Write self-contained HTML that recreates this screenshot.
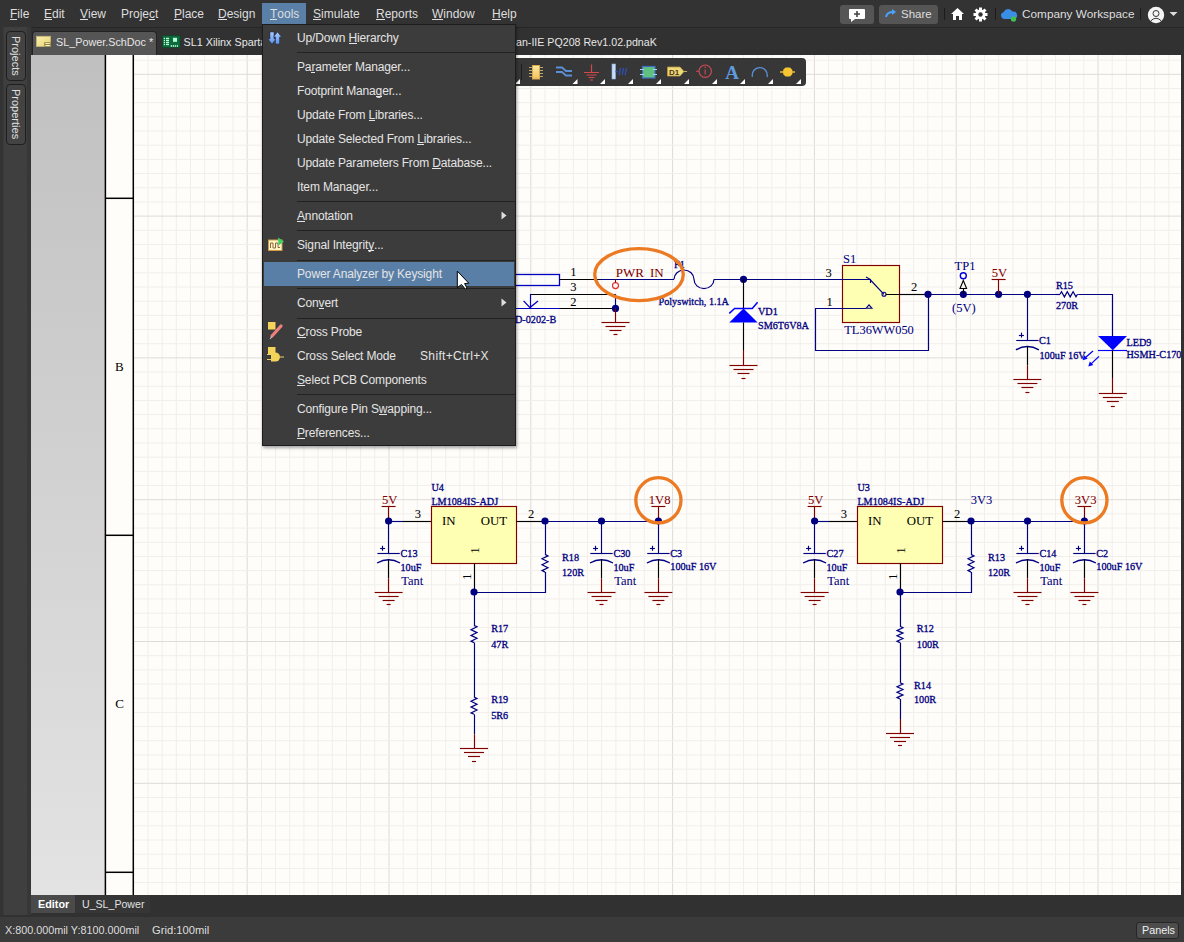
<!DOCTYPE html>
<html><head><meta charset="utf-8">
<style>
*{margin:0;padding:0;box-sizing:border-box}
html,body{width:1184px;height:942px;overflow:hidden;background:#313131;font-family:"Liberation Sans",sans-serif;color:#dcdcdc}
.a{position:absolute}
#menubar{left:0;top:0;width:1184px;height:27px;background:#333333}
#menubar .m{position:absolute;top:7px;font-size:12px;line-height:15px;color:#dedede;white-space:nowrap}
u{text-decoration:none;position:relative}
u:after{content:"";position:absolute;left:0;right:0;bottom:1px;height:1px;background:currentColor}
#tabbar{left:0;top:27px;width:1184px;height:28px;background:#313131;border-top:1px solid #262626}
#leftpanel{left:0;top:27px;width:31px;height:888px;background:linear-gradient(90deg,#333 0,#333 3px,#3a3a3a 3px,#3a3a3a 4.5px,#3f3f3f 4.5px,#3f3f3f 27px,#373737 27px)}
.sidetab{position:absolute;left:6px;width:20px;background:#434343;border:1px solid #1f1f1f;border-radius:4px}
.sidetab span{position:absolute;left:3px;top:4px;writing-mode:vertical-rl;font-size:11px;color:#e0e0e0;line-height:12px}
#doc{left:31px;top:55px;width:1150px;height:840px;overflow:hidden;background:#fffdfa}
#graycol{left:0;top:0;width:74px;height:840px;background:linear-gradient(#c0c0c0,#e3e3e3)}
#status{left:0;top:917px;width:1184px;height:25px;background:#3b3b3b}
#dropdown{left:262px;top:24px;width:254px;height:422px;background:#3c3c3c;border:1px solid #1c1c1c;box-shadow:1px 2px 3px rgba(0,0,0,.35)}
.mi{position:absolute;left:34px;font-size:12px;letter-spacing:-0.15px;line-height:14px;color:#e4e4e4;white-space:nowrap}
.sep{position:absolute;left:34px;right:0;height:1px;background:#222}
.tab{position:absolute;top:31px;height:24px;font-size:11px;line-height:14px;white-space:nowrap;color:#e6e6e6}
</style></head><body>
<div id="menubar" class="a">
  <div class="m" style="left:10px"><u>F</u>ile</div>
  <div class="m" style="left:44px"><u>E</u>dit</div>
  <div class="m" style="left:80px"><u>V</u>iew</div>
  <div class="m" style="left:121px">Proje<u>c</u>t</div>
  <div class="m" style="left:174px"><u>P</u>lace</div>
  <div class="m" style="left:218px"><u>D</u>esign</div>
  <div class="a" style="left:262px;top:3px;width:44px;height:21px;background:#5b80a8"></div>
  <div class="m" style="left:270px"><u>T</u>ools</div>
  <div class="m" style="left:313px"><u>S</u>imulate</div>
  <div class="m" style="left:376px"><u>R</u>eports</div>
  <div class="m" style="left:432px"><u>W</u>indow</div>
  <div class="m" style="left:492px"><u>H</u>elp</div>
  <!-- right side -->
  <div class="a" style="left:840px;top:5px;width:34px;height:19px;background:#555;border-radius:3px"></div>
  <svg class="a" style="left:848px;top:8px" width="18" height="15" viewBox="0 0 18 15"><path d="M2 1h14a1 1 0 0 1 1 1v8a1 1 0 0 1-1 1H7l-4 3v-3H2a1 1 0 0 1-1-1V2a1 1 0 0 1 1-1z" fill="#fff"/><path d="M9 3v6M6 6h6" stroke="#444" stroke-width="1.6"/></svg>
  <div class="a" style="left:879px;top:5px;width:59px;height:19px;background:#555;border-radius:3px"></div>
  <svg class="a" style="left:885px;top:9px" width="12" height="10" viewBox="0 0 12 10"><path d="M1 8 Q2 3 8 3" stroke="#4aa3ff" stroke-width="2" fill="none"/><path d="M7 0 L11 3 L7 6z" fill="#4aa3ff"/></svg>
  <div class="m" style="left:901px;font-size:11.5px">Share</div>
  <div class="a" style="left:944px;top:8px;width:1px;height:12px;background:#1c1c1c"></div>
  <svg class="a" style="left:950px;top:7px" width="15" height="14" viewBox="0 0 15 14"><path d="M7.5 1 L14 7 H12 V13 H9 V9 H6 V13 H3 V7 H1z" fill="#fff"/></svg>
  <svg class="a" style="left:973px;top:7px" width="15" height="15" viewBox="0 0 15 15"><g fill="#fff"><circle cx="7.5" cy="7.5" r="5"/><rect x="6" y="0.5" width="3" height="14"/><rect x="0.5" y="6" width="14" height="3"/><rect x="6" y="0.5" width="3" height="14" transform="rotate(45 7.5 7.5)"/><rect x="6" y="0.5" width="3" height="14" transform="rotate(-45 7.5 7.5)"/></g><circle cx="7.5" cy="7.5" r="2.2" fill="#333"/></svg>
  <div class="a" style="left:995px;top:8px;width:1px;height:12px;background:#1c1c1c"></div>
  <svg class="a" style="left:1000px;top:7px" width="18" height="15" viewBox="0 0 18 15"><path d="M4 12 A3.5 3.5 0 0 1 3.5 5.2 A5 5 0 0 1 12.5 4.5 A3.8 3.8 0 0 1 14 12z" fill="#3a8ee6"/><circle cx="13.5" cy="12" r="2.7" fill="#3fbf4f"/></svg>
  <div class="m" style="left:1022px;font-size:11.8px">Company Workspace</div>
  <div class="a" style="left:1140px;top:8px;width:1px;height:12px;background:#1c1c1c"></div>
  <svg class="a" style="left:1147px;top:6px" width="18" height="18" viewBox="0 0 18 18"><circle cx="9" cy="9" r="8.2" fill="#f4f4f4"/><circle cx="9" cy="7.5" r="3" fill="none" stroke="#333" stroke-width="1"/><path d="M3.5 15 Q9 9.5 14.5 15" fill="none" stroke="#333" stroke-width="1"/></svg>
  <svg class="a" style="left:1169px;top:11px" width="9" height="6" viewBox="0 0 9 6"><path d="M0.5 1 H8.5 L4.5 5z" fill="#ddd"/></svg>
</div>
<div id="tabbar" class="a"></div>
<div class="a" style="left:32px;top:31px;width:125px;height:24px;background:#555;border-radius:4px 4px 0 0;border:1px solid #222;border-bottom:none"></div>
<svg class="a" style="left:36px;top:35px" width="16" height="13" viewBox="36 35 16 13"><defs><linearGradient id="sdg" x1="0" y1="0" x2="1" y2="1"><stop offset="0" stop-color="#fbf0b0"/><stop offset="1" stop-color="#e9d470"/></linearGradient></defs><rect x="36.5" y="36.3" width="14" height="10.2" fill="url(#sdg)" stroke="#c8b878" stroke-width="0.8"/><rect x="44.3" y="42.3" width="6.3" height="4.3" fill="#8a7a3a"/><path d="M45.3 43.6h4.5M45.3 45.5h4.5" stroke="#fff6c0" stroke-width="1"/></svg>
<div class="tab" style="left:56px;top:35px;font-size:10.8px">SL_Power.SchDoc *</div>
<svg class="a" style="left:162px;top:35px" width="19" height="13" viewBox="162 35 19 13"><rect x="162.6" y="35.8" width="17.4" height="11.7" fill="#0d6b3c" stroke="#0a4a2a" stroke-width="0.6"/><g fill="#b8ffd8"><rect x="163.8" y="37.8" width="1.2" height="1.3"/><rect x="163.8" y="39.8" width="1.2" height="1.3"/><rect x="163.8" y="41.8" width="1.2" height="1.3"/><rect x="163.8" y="43.8" width="1.2" height="1.3"/><rect x="166" y="37.8" width="3" height="1.3"/><rect x="166" y="39.8" width="3" height="1.3"/><rect x="166" y="41.8" width="3" height="1.3"/><rect x="166" y="43.8" width="3" height="1.3"/><rect x="173" y="37.8" width="4" height="4"/><rect x="170.8" y="45" width="1" height="2"/><rect x="172.8" y="45" width="1" height="2"/><rect x="174.8" y="45" width="1" height="2"/><rect x="176.8" y="45" width="1" height="2"/></g></svg>
<div class="tab" style="left:183.5px;top:35px;font-size:10.8px">SL1 Xilinx Spartan-IIE</div>
<div class="tab" style="left:516px;top:35px;font-size:10.65px">an-IIE PQ208 Rev1.02.pdnaK</div>
<div id="leftpanel" class="a">
  <div class="sidetab" style="top:4px;height:50px"><span>Projects</span></div>
  <div class="sidetab" style="top:57px;height:61px"><span>Properties</span></div>
</div>
<div id="doc" class="a">
  <div id="graycol" class="a"></div>
</div>
<div class="a" style="left:31px;top:895px;width:44px;height:18px;background:#4a4a4a"></div>
<div class="a" style="left:38px;top:898px;font-size:10.8px;font-weight:bold;color:#fff;line-height:13px">Editor</div>
<div class="a" style="left:75px;top:895px;width:75px;height:18px;background:#363636"></div>
<div class="a" style="left:82px;top:898px;font-size:10.6px;color:#e0e0e0;line-height:13px">U_SL_Power</div>
<!--SCH--><svg class="a" style="left:0;top:0" width="1184" height="942" viewBox="0 0 1184 942" font-family="Liberation Serif"><defs><clipPath id="dc"><rect x="31" y="55" width="1150" height="840"/></clipPath></defs><g clip-path="url(#dc)"><line x1="147.94" y1="55" x2="147.94" y2="895" stroke="#f1eeeb" stroke-width="1"/><line x1="162.12" y1="55" x2="162.12" y2="895" stroke="#f1eeeb" stroke-width="1"/><line x1="176.30" y1="55" x2="176.30" y2="895" stroke="#f1eeeb" stroke-width="1"/><line x1="190.48" y1="55" x2="190.48" y2="895" stroke="#f1eeeb" stroke-width="1"/><line x1="204.66" y1="55" x2="204.66" y2="895" stroke="#f1eeeb" stroke-width="1"/><line x1="218.84" y1="55" x2="218.84" y2="895" stroke="#f1eeeb" stroke-width="1"/><line x1="233.02" y1="55" x2="233.02" y2="895" stroke="#f1eeeb" stroke-width="1"/><line x1="247.20" y1="55" x2="247.20" y2="895" stroke="#dedbd8" stroke-width="1"/><line x1="261.38" y1="55" x2="261.38" y2="895" stroke="#f1eeeb" stroke-width="1"/><line x1="275.56" y1="55" x2="275.56" y2="895" stroke="#f1eeeb" stroke-width="1"/><line x1="289.74" y1="55" x2="289.74" y2="895" stroke="#f1eeeb" stroke-width="1"/><line x1="303.92" y1="55" x2="303.92" y2="895" stroke="#f1eeeb" stroke-width="1"/><line x1="318.10" y1="55" x2="318.10" y2="895" stroke="#f1eeeb" stroke-width="1"/><line x1="332.28" y1="55" x2="332.28" y2="895" stroke="#f1eeeb" stroke-width="1"/><line x1="346.46" y1="55" x2="346.46" y2="895" stroke="#f1eeeb" stroke-width="1"/><line x1="360.64" y1="55" x2="360.64" y2="895" stroke="#f1eeeb" stroke-width="1"/><line x1="374.82" y1="55" x2="374.82" y2="895" stroke="#f1eeeb" stroke-width="1"/><line x1="389.00" y1="55" x2="389.00" y2="895" stroke="#dedbd8" stroke-width="1"/><line x1="403.18" y1="55" x2="403.18" y2="895" stroke="#f1eeeb" stroke-width="1"/><line x1="417.36" y1="55" x2="417.36" y2="895" stroke="#f1eeeb" stroke-width="1"/><line x1="431.54" y1="55" x2="431.54" y2="895" stroke="#f1eeeb" stroke-width="1"/><line x1="445.72" y1="55" x2="445.72" y2="895" stroke="#f1eeeb" stroke-width="1"/><line x1="459.90" y1="55" x2="459.90" y2="895" stroke="#f1eeeb" stroke-width="1"/><line x1="474.08" y1="55" x2="474.08" y2="895" stroke="#f1eeeb" stroke-width="1"/><line x1="488.26" y1="55" x2="488.26" y2="895" stroke="#f1eeeb" stroke-width="1"/><line x1="502.44" y1="55" x2="502.44" y2="895" stroke="#f1eeeb" stroke-width="1"/><line x1="516.62" y1="55" x2="516.62" y2="895" stroke="#f1eeeb" stroke-width="1"/><line x1="530.80" y1="55" x2="530.80" y2="895" stroke="#dedbd8" stroke-width="1"/><line x1="544.98" y1="55" x2="544.98" y2="895" stroke="#f1eeeb" stroke-width="1"/><line x1="559.16" y1="55" x2="559.16" y2="895" stroke="#f1eeeb" stroke-width="1"/><line x1="573.34" y1="55" x2="573.34" y2="895" stroke="#f1eeeb" stroke-width="1"/><line x1="587.52" y1="55" x2="587.52" y2="895" stroke="#f1eeeb" stroke-width="1"/><line x1="601.70" y1="55" x2="601.70" y2="895" stroke="#f1eeeb" stroke-width="1"/><line x1="615.88" y1="55" x2="615.88" y2="895" stroke="#f1eeeb" stroke-width="1"/><line x1="630.06" y1="55" x2="630.06" y2="895" stroke="#f1eeeb" stroke-width="1"/><line x1="644.24" y1="55" x2="644.24" y2="895" stroke="#f1eeeb" stroke-width="1"/><line x1="658.42" y1="55" x2="658.42" y2="895" stroke="#f1eeeb" stroke-width="1"/><line x1="672.60" y1="55" x2="672.60" y2="895" stroke="#dedbd8" stroke-width="1"/><line x1="686.78" y1="55" x2="686.78" y2="895" stroke="#f1eeeb" stroke-width="1"/><line x1="700.96" y1="55" x2="700.96" y2="895" stroke="#f1eeeb" stroke-width="1"/><line x1="715.14" y1="55" x2="715.14" y2="895" stroke="#f1eeeb" stroke-width="1"/><line x1="729.32" y1="55" x2="729.32" y2="895" stroke="#f1eeeb" stroke-width="1"/><line x1="743.50" y1="55" x2="743.50" y2="895" stroke="#f1eeeb" stroke-width="1"/><line x1="757.68" y1="55" x2="757.68" y2="895" stroke="#f1eeeb" stroke-width="1"/><line x1="771.86" y1="55" x2="771.86" y2="895" stroke="#f1eeeb" stroke-width="1"/><line x1="786.04" y1="55" x2="786.04" y2="895" stroke="#f1eeeb" stroke-width="1"/><line x1="800.22" y1="55" x2="800.22" y2="895" stroke="#f1eeeb" stroke-width="1"/><line x1="814.40" y1="55" x2="814.40" y2="895" stroke="#dedbd8" stroke-width="1"/><line x1="828.58" y1="55" x2="828.58" y2="895" stroke="#f1eeeb" stroke-width="1"/><line x1="842.76" y1="55" x2="842.76" y2="895" stroke="#f1eeeb" stroke-width="1"/><line x1="856.94" y1="55" x2="856.94" y2="895" stroke="#f1eeeb" stroke-width="1"/><line x1="871.12" y1="55" x2="871.12" y2="895" stroke="#f1eeeb" stroke-width="1"/><line x1="885.30" y1="55" x2="885.30" y2="895" stroke="#f1eeeb" stroke-width="1"/><line x1="899.48" y1="55" x2="899.48" y2="895" stroke="#f1eeeb" stroke-width="1"/><line x1="913.66" y1="55" x2="913.66" y2="895" stroke="#f1eeeb" stroke-width="1"/><line x1="927.84" y1="55" x2="927.84" y2="895" stroke="#f1eeeb" stroke-width="1"/><line x1="942.02" y1="55" x2="942.02" y2="895" stroke="#f1eeeb" stroke-width="1"/><line x1="956.20" y1="55" x2="956.20" y2="895" stroke="#dedbd8" stroke-width="1"/><line x1="970.38" y1="55" x2="970.38" y2="895" stroke="#f1eeeb" stroke-width="1"/><line x1="984.56" y1="55" x2="984.56" y2="895" stroke="#f1eeeb" stroke-width="1"/><line x1="998.74" y1="55" x2="998.74" y2="895" stroke="#f1eeeb" stroke-width="1"/><line x1="1012.92" y1="55" x2="1012.92" y2="895" stroke="#f1eeeb" stroke-width="1"/><line x1="1027.10" y1="55" x2="1027.10" y2="895" stroke="#f1eeeb" stroke-width="1"/><line x1="1041.28" y1="55" x2="1041.28" y2="895" stroke="#f1eeeb" stroke-width="1"/><line x1="1055.46" y1="55" x2="1055.46" y2="895" stroke="#f1eeeb" stroke-width="1"/><line x1="1069.64" y1="55" x2="1069.64" y2="895" stroke="#f1eeeb" stroke-width="1"/><line x1="1083.82" y1="55" x2="1083.82" y2="895" stroke="#f1eeeb" stroke-width="1"/><line x1="1098.00" y1="55" x2="1098.00" y2="895" stroke="#dedbd8" stroke-width="1"/><line x1="1112.18" y1="55" x2="1112.18" y2="895" stroke="#f1eeeb" stroke-width="1"/><line x1="1126.36" y1="55" x2="1126.36" y2="895" stroke="#f1eeeb" stroke-width="1"/><line x1="1140.54" y1="55" x2="1140.54" y2="895" stroke="#f1eeeb" stroke-width="1"/><line x1="1154.72" y1="55" x2="1154.72" y2="895" stroke="#f1eeeb" stroke-width="1"/><line x1="1168.90" y1="55" x2="1168.90" y2="895" stroke="#f1eeeb" stroke-width="1"/><line x1="134" y1="60.12" x2="1181" y2="60.12" stroke="#f1eeeb" stroke-width="1"/><line x1="134" y1="74.30" x2="1181" y2="74.30" stroke="#dedbd8" stroke-width="1"/><line x1="134" y1="88.48" x2="1181" y2="88.48" stroke="#f1eeeb" stroke-width="1"/><line x1="134" y1="102.66" x2="1181" y2="102.66" stroke="#f1eeeb" stroke-width="1"/><line x1="134" y1="116.84" x2="1181" y2="116.84" stroke="#f1eeeb" stroke-width="1"/><line x1="134" y1="131.02" x2="1181" y2="131.02" stroke="#f1eeeb" stroke-width="1"/><line x1="134" y1="145.20" x2="1181" y2="145.20" stroke="#f1eeeb" stroke-width="1"/><line x1="134" y1="159.38" x2="1181" y2="159.38" stroke="#f1eeeb" stroke-width="1"/><line x1="134" y1="173.56" x2="1181" y2="173.56" stroke="#f1eeeb" stroke-width="1"/><line x1="134" y1="187.74" x2="1181" y2="187.74" stroke="#f1eeeb" stroke-width="1"/><line x1="134" y1="201.92" x2="1181" y2="201.92" stroke="#f1eeeb" stroke-width="1"/><line x1="134" y1="216.10" x2="1181" y2="216.10" stroke="#dedbd8" stroke-width="1"/><line x1="134" y1="230.28" x2="1181" y2="230.28" stroke="#f1eeeb" stroke-width="1"/><line x1="134" y1="244.46" x2="1181" y2="244.46" stroke="#f1eeeb" stroke-width="1"/><line x1="134" y1="258.64" x2="1181" y2="258.64" stroke="#f1eeeb" stroke-width="1"/><line x1="134" y1="272.82" x2="1181" y2="272.82" stroke="#f1eeeb" stroke-width="1"/><line x1="134" y1="287.00" x2="1181" y2="287.00" stroke="#f1eeeb" stroke-width="1"/><line x1="134" y1="301.18" x2="1181" y2="301.18" stroke="#f1eeeb" stroke-width="1"/><line x1="134" y1="315.36" x2="1181" y2="315.36" stroke="#f1eeeb" stroke-width="1"/><line x1="134" y1="329.54" x2="1181" y2="329.54" stroke="#f1eeeb" stroke-width="1"/><line x1="134" y1="343.72" x2="1181" y2="343.72" stroke="#f1eeeb" stroke-width="1"/><line x1="134" y1="357.90" x2="1181" y2="357.90" stroke="#dedbd8" stroke-width="1"/><line x1="134" y1="372.08" x2="1181" y2="372.08" stroke="#f1eeeb" stroke-width="1"/><line x1="134" y1="386.26" x2="1181" y2="386.26" stroke="#f1eeeb" stroke-width="1"/><line x1="134" y1="400.44" x2="1181" y2="400.44" stroke="#f1eeeb" stroke-width="1"/><line x1="134" y1="414.62" x2="1181" y2="414.62" stroke="#f1eeeb" stroke-width="1"/><line x1="134" y1="428.80" x2="1181" y2="428.80" stroke="#f1eeeb" stroke-width="1"/><line x1="134" y1="442.98" x2="1181" y2="442.98" stroke="#f1eeeb" stroke-width="1"/><line x1="134" y1="457.16" x2="1181" y2="457.16" stroke="#f1eeeb" stroke-width="1"/><line x1="134" y1="471.34" x2="1181" y2="471.34" stroke="#f1eeeb" stroke-width="1"/><line x1="134" y1="485.52" x2="1181" y2="485.52" stroke="#f1eeeb" stroke-width="1"/><line x1="134" y1="499.70" x2="1181" y2="499.70" stroke="#dedbd8" stroke-width="1"/><line x1="134" y1="513.88" x2="1181" y2="513.88" stroke="#f1eeeb" stroke-width="1"/><line x1="134" y1="528.06" x2="1181" y2="528.06" stroke="#f1eeeb" stroke-width="1"/><line x1="134" y1="542.24" x2="1181" y2="542.24" stroke="#f1eeeb" stroke-width="1"/><line x1="134" y1="556.42" x2="1181" y2="556.42" stroke="#f1eeeb" stroke-width="1"/><line x1="134" y1="570.60" x2="1181" y2="570.60" stroke="#f1eeeb" stroke-width="1"/><line x1="134" y1="584.78" x2="1181" y2="584.78" stroke="#f1eeeb" stroke-width="1"/><line x1="134" y1="598.96" x2="1181" y2="598.96" stroke="#f1eeeb" stroke-width="1"/><line x1="134" y1="613.14" x2="1181" y2="613.14" stroke="#f1eeeb" stroke-width="1"/><line x1="134" y1="627.32" x2="1181" y2="627.32" stroke="#f1eeeb" stroke-width="1"/><line x1="134" y1="641.50" x2="1181" y2="641.50" stroke="#dedbd8" stroke-width="1"/><line x1="134" y1="655.68" x2="1181" y2="655.68" stroke="#f1eeeb" stroke-width="1"/><line x1="134" y1="669.86" x2="1181" y2="669.86" stroke="#f1eeeb" stroke-width="1"/><line x1="134" y1="684.04" x2="1181" y2="684.04" stroke="#f1eeeb" stroke-width="1"/><line x1="134" y1="698.22" x2="1181" y2="698.22" stroke="#f1eeeb" stroke-width="1"/><line x1="134" y1="712.40" x2="1181" y2="712.40" stroke="#f1eeeb" stroke-width="1"/><line x1="134" y1="726.58" x2="1181" y2="726.58" stroke="#f1eeeb" stroke-width="1"/><line x1="134" y1="740.76" x2="1181" y2="740.76" stroke="#f1eeeb" stroke-width="1"/><line x1="134" y1="754.94" x2="1181" y2="754.94" stroke="#f1eeeb" stroke-width="1"/><line x1="134" y1="769.12" x2="1181" y2="769.12" stroke="#f1eeeb" stroke-width="1"/><line x1="134" y1="783.30" x2="1181" y2="783.30" stroke="#dedbd8" stroke-width="1"/><line x1="134" y1="797.48" x2="1181" y2="797.48" stroke="#f1eeeb" stroke-width="1"/><line x1="134" y1="811.66" x2="1181" y2="811.66" stroke="#f1eeeb" stroke-width="1"/><line x1="134" y1="825.84" x2="1181" y2="825.84" stroke="#f1eeeb" stroke-width="1"/><line x1="134" y1="840.02" x2="1181" y2="840.02" stroke="#f1eeeb" stroke-width="1"/><line x1="134" y1="854.20" x2="1181" y2="854.20" stroke="#f1eeeb" stroke-width="1"/><line x1="134" y1="868.38" x2="1181" y2="868.38" stroke="#f1eeeb" stroke-width="1"/><line x1="134" y1="882.56" x2="1181" y2="882.56" stroke="#f1eeeb" stroke-width="1"/><line x1="105.4" y1="55" x2="105.4" y2="895" stroke="#000" stroke-width="1.5"/><line x1="133.3" y1="55" x2="133.3" y2="895" stroke="#000" stroke-width="1.5"/><line x1="105.4" y1="198.3" x2="133.3" y2="198.3" stroke="#000" stroke-width="1.5"/><line x1="105.4" y1="535.3" x2="133.3" y2="535.3" stroke="#000" stroke-width="1.5"/><line x1="105.4" y1="872.3" x2="133.3" y2="872.3" stroke="#000" stroke-width="1.5"/><text x="119.3" y="371" font-size="13" fill="#000" text-anchor="middle">B</text><text x="119.7" y="708" font-size="13" fill="#000" text-anchor="middle">C</text><rect x="480.5" y="274.5" width="79" height="11" fill="none" stroke="#0000c0" stroke-width="1.3"/><line x1="559.4" y1="279.5" x2="600" y2="279.5" stroke="#000" stroke-width="1.15"/><line x1="600" y1="279.5" x2="674" y2="279.5" stroke="#000080" stroke-width="1.15"/><text x="573.4" y="276.4" font-size="12.5" fill="#000" stroke="#000" stroke-width="0.05" text-anchor="middle" >1</text><text x="573.4" y="290.8" font-size="12.5" fill="#000" stroke="#000" stroke-width="0.05" text-anchor="middle" >3</text><text x="573.4" y="306.1" font-size="12.5" fill="#000" stroke="#000" stroke-width="0.05" text-anchor="middle" >2</text><line x1="530" y1="294.5" x2="615.5" y2="294.5" stroke="#000" stroke-width="1.15"/><line x1="530.5" y1="294.3" x2="530.5" y2="307.6" stroke="#0000c0" stroke-width="1.15"/><polyline points="523.6,300.9 530,307.6 538,300.9" stroke="#0000c0" stroke-width="1.3" fill="none"/><line x1="480" y1="308.5" x2="560" y2="308.5" stroke="#0000c0" stroke-width="1.15"/><line x1="560" y1="308.5" x2="615.5" y2="308.5" stroke="#000" stroke-width="1.15"/><line x1="615.5" y1="294.3" x2="615.5" y2="308.4" stroke="#000080" stroke-width="1.15"/><circle cx="615.5" cy="308.4" r="3.6" fill="#000080"/><line x1="615.5" y1="308.4" x2="615.5" y2="322" stroke="#800000" stroke-width="1.15"/><line x1="601.5" y1="322.5" x2="629.5" y2="322.5" stroke="#800000" stroke-width="1.15"/><line x1="605.5" y1="326.5" x2="625.5" y2="326.5" stroke="#800000" stroke-width="1.15"/><line x1="609.5" y1="330.5" x2="621.5" y2="330.5" stroke="#800000" stroke-width="1.15"/><line x1="613.5" y1="334.5" x2="617.5" y2="334.5" stroke="#800000" stroke-width="1.15"/><text x="515" y="323.0" font-size="10.2" fill="#000080" stroke="#000080" stroke-width="0.3" text-anchor="start" >D-0202-B</text><circle cx="615.5" cy="285.6" r="3" fill="none" stroke="#e03535" stroke-width="1.2"/><text x="615.8" y="276.7" font-size="13" fill="#800000" stroke="#800000" stroke-width="0.05" text-anchor="start" >PWR</text><text x="650" y="276.7" font-size="13" fill="#800000" stroke="#800000" stroke-width="0.05" text-anchor="start" >IN</text><line x1="615.5" y1="279.3" x2="615.5" y2="282.6" stroke="#800000" stroke-width="1.1"/><text x="674" y="268.4" font-size="10.2" fill="#000080" stroke="#000080" stroke-width="0.3" text-anchor="start" >F1</text><path d="M674,279.3 A10,9.3 0 0 1 694,279.3 A10,9.3 0 0 0 714,279.3" stroke="#000080" stroke-width="1.2" fill="none"/><text x="658.5" y="305.4" font-size="10.2" fill="#000080" stroke="#000080" stroke-width="0.3" text-anchor="start" >Polyswitch, 1.1A</text><line x1="714" y1="279.5" x2="815" y2="279.5" stroke="#000080" stroke-width="1.15"/><line x1="815" y1="279.5" x2="870" y2="279.5" stroke="#000" stroke-width="1.15"/><circle cx="743.5" cy="279.3" r="3.6" fill="#000080"/><line x1="743.5" y1="279.3" x2="743.5" y2="308.6" stroke="#000" stroke-width="1.15"/><path d="M729.3,322.5 L757.6,322.5 L743.5,308.6z" fill="#0000ff"/><polyline points="729.3,313.4 734.6,308.5 752.3,308.5 757.6,302.2" stroke="#0000ff" stroke-width="1.5" fill="none"/><line x1="743.5" y1="322.5" x2="743.5" y2="350" stroke="#000" stroke-width="1.15"/><line x1="743.5" y1="350" x2="743.5" y2="365.2" stroke="#800000" stroke-width="1.15"/><line x1="729.5" y1="365.5" x2="757.5" y2="365.5" stroke="#800000" stroke-width="1.15"/><line x1="733.5" y1="369.5" x2="753.5" y2="369.5" stroke="#800000" stroke-width="1.15"/><line x1="737.5" y1="373.5" x2="749.5" y2="373.5" stroke="#800000" stroke-width="1.15"/><line x1="741.5" y1="378.5" x2="745.5" y2="378.5" stroke="#800000" stroke-width="1.15"/><text x="758" y="315.2" font-size="10.2" fill="#000080" stroke="#000080" stroke-width="0.3" text-anchor="start" >VD1</text><text x="758" y="328.8" font-size="10.2" fill="#000080" stroke="#000080" stroke-width="0.3" text-anchor="start" >SM6T6V8A</text><text x="828.5" y="276.6" font-size="12.5" fill="#000" stroke="#000" stroke-width="0.05" text-anchor="middle" >3</text><text x="829.6" y="306.0" font-size="12.5" fill="#000" stroke="#000" stroke-width="0.05" text-anchor="middle" >1</text><rect x="842.5" y="265.5" width="57" height="57" fill="#ffffb4" stroke="#800000" stroke-width="1.15"/><line x1="815" y1="279.5" x2="870" y2="279.5" stroke="#000080" stroke-width="1.15"/><polyline points="866,277 870.5,279.5 870.5,283" stroke="#000080" stroke-width="1.1" fill="none"/><line x1="870" y1="279.5" x2="884" y2="294.3" stroke="#000080" stroke-width="1.2"/><circle cx="884" cy="294.3" r="2" fill="none" stroke="#000080" stroke-width="1.1"/><line x1="886" y1="294.5" x2="928" y2="294.5" stroke="#000" stroke-width="1.15"/><line x1="815" y1="308.5" x2="866" y2="308.5" stroke="#000080" stroke-width="1.15"/><path d="M866,308.3 L869,304.8 L872,308.3z" fill="none" stroke="#000080" stroke-width="1.1"/><line x1="899.7" y1="294.5" x2="928" y2="294.5" stroke="#000" stroke-width="1.15"/><text x="914" y="291.3" font-size="12.5" fill="#000" stroke="#000" stroke-width="0.05" text-anchor="middle" >2</text><text x="829.6" y="306.0" font-size="12.5" fill="#000" stroke="#000" stroke-width="0.05" text-anchor="start" ></text><polyline points="815.5,308.3 815.5,350.5 928.5,350.5 928.5,294.3" stroke="#000080" stroke-width="1.2" fill="none"/><text x="843" y="263.4" font-size="12.5" fill="#000080" stroke="#000080" stroke-width="0.05" text-anchor="start" >S1</text><text x="844.3" y="333.5" font-size="12.4" fill="#000080" stroke="#000080" stroke-width="0.05" text-anchor="start" >TL36WW050</text><line x1="928" y1="294.5" x2="1056" y2="294.5" stroke="#000080" stroke-width="1.15"/><circle cx="928" cy="294.3" r="3.6" fill="#000080"/><circle cx="963.3" cy="294.3" r="3.6" fill="#000080"/><circle cx="998.6" cy="294.3" r="3.6" fill="#000080"/><circle cx="1027.4" cy="294.3" r="3.6" fill="#000080"/><text x="954.6" y="270.1" font-size="12.5" fill="#000080" stroke="#000080" stroke-width="0.05" text-anchor="start" >TP1</text><circle cx="963.3" cy="275.7" r="3" fill="none" stroke="#0000e0" stroke-width="1.4"/><path d="M963.3,280.5 L960,288.5 L966.6,288.5z" fill="none" stroke="#000" stroke-width="1.1"/><line x1="963.5" y1="288.5" x2="963.5" y2="294.3" stroke="#000" stroke-width="1.15"/><text x="952" y="311.5" font-size="12.5" fill="#000080" stroke="#000080" stroke-width="0.05" text-anchor="start" >(5V)</text><line x1="998.5" y1="279.5" x2="998.5" y2="294.3" stroke="#800000" stroke-width="1.15"/><line x1="991.6" y1="279.5" x2="1005.6" y2="279.5" stroke="#800000" stroke-width="1.15"/><text x="991.7" y="277.0" font-size="12.6" fill="#800000" stroke="#800000" stroke-width="0.05" text-anchor="start" >5V</text><line x1="1056" y1="294.5" x2="1060" y2="294.5" stroke="#000080" stroke-width="1.15"/><polyline points="1060,294.3 1061.5,291.7 1064.4,296.90000000000003 1067.3,291.7 1070.2,296.90000000000003 1073.1,291.7 1076.0,296.90000000000003 1077.5,294.3" stroke="#000080" stroke-width="1.2" fill="none"/><line x1="1077.5" y1="294.5" x2="1078.3" y2="294.5" stroke="#000080" stroke-width="1.15"/><text x="1055.9" y="289.1" font-size="10.2" fill="#000080" stroke="#000080" stroke-width="0.3" text-anchor="start" >R15</text><text x="1056" y="309.3" font-size="10.2" fill="#000080" stroke="#000080" stroke-width="0.3" text-anchor="start" >270R</text><polyline points="1078.3,294.5 1112.5,294.5 1112.5,336" stroke="#000080" stroke-width="1.2" fill="none"/><path d="M1098,336 L1127,336 L1112.8,350.2z" fill="#0000ff"/><line x1="1098" y1="350.5" x2="1127" y2="350.5" stroke="#0000ff" stroke-width="1.15"/><line x1="1112.5" y1="350.2" x2="1112.5" y2="378" stroke="#000" stroke-width="1.15"/><line x1="1112.5" y1="378" x2="1112.5" y2="393.3" stroke="#800000" stroke-width="1.15"/><line x1="1098.8" y1="393.5" x2="1126.8" y2="393.5" stroke="#800000" stroke-width="1.15"/><line x1="1102.8" y1="397.5" x2="1122.8" y2="397.5" stroke="#800000" stroke-width="1.15"/><line x1="1106.8" y1="401.5" x2="1118.8" y2="401.5" stroke="#800000" stroke-width="1.15"/><line x1="1110.8" y1="406.5" x2="1114.8" y2="406.5" stroke="#800000" stroke-width="1.15"/><line x1="1093" y1="351" x2="1084.6" y2="358.2" stroke="#0000ff" stroke-width="1.3"/><path d="M1082.6,360.2 L1084.1,355.2 L1087.6,358.7z" fill="#0000ff"/><line x1="1099" y1="356.4" x2="1090.3" y2="364.6" stroke="#0000ff" stroke-width="1.3"/><path d="M1088.3,366.6 L1089.8,361.6 L1093.3,365.1z" fill="#0000ff"/><text x="1126.5" y="346.4" font-size="10.2" fill="#000080" stroke="#000080" stroke-width="0.3" text-anchor="start" >LED9</text><text x="1126.5" y="357.5" font-size="10.2" fill="#000080" stroke="#000080" stroke-width="0.3" text-anchor="start" >HSMH-C170</text><line x1="1027.5" y1="294.3" x2="1027.5" y2="340.3" stroke="#000080" stroke-width="1.15"/><line x1="1016.2" y1="340.5" x2="1038.6000000000001" y2="340.5" stroke="#000080" stroke-width="1.15"/><line x1="1018.9000000000001" y1="335.5" x2="1023.9000000000001" y2="335.5" stroke="#000080" stroke-width="1.15"/><line x1="1021.5" y1="332.6" x2="1021.5" y2="337.6" stroke="#000080" stroke-width="1.15"/><path d="M1015.9000000000001,349.8 Q1027.4,343.3 1038.9,349.8" stroke="#000080" stroke-width="1.4" fill="none"/><line x1="1027.5" y1="346.3" x2="1027.5" y2="365.3" stroke="#000" stroke-width="1.15"/><line x1="1027.5" y1="365.3" x2="1027.5" y2="379.1" stroke="#800000" stroke-width="1.15"/><line x1="1013.4000000000001" y1="379.5" x2="1041.4" y2="379.5" stroke="#800000" stroke-width="1.15"/><line x1="1017.4000000000001" y1="383.5" x2="1037.4" y2="383.5" stroke="#800000" stroke-width="1.15"/><line x1="1021.4000000000001" y1="387.5" x2="1033.4" y2="387.5" stroke="#800000" stroke-width="1.15"/><line x1="1025.4" y1="392.5" x2="1029.4" y2="392.5" stroke="#800000" stroke-width="1.15"/><text x="1039" y="343.7" font-size="10.2" fill="#000080" stroke="#000080" stroke-width="0.3" text-anchor="start" >C1</text><text x="1039.5" y="359.3" font-size="10.2" fill="#000080" stroke="#000080" stroke-width="0.3" text-anchor="start" >100uF 16V</text><line x1="388.5" y1="506.3" x2="388.5" y2="521" stroke="#800000" stroke-width="1.15"/><line x1="381.6" y1="506.5" x2="395.6" y2="506.5" stroke="#800000" stroke-width="1.15"/><text x="381.9" y="504.2" font-size="12.6" fill="#800000" stroke="#800000" stroke-width="0.05" text-anchor="start" >5V</text><circle cx="388.6" cy="521" r="3.6" fill="#000080"/><line x1="388.6" y1="521.5" x2="403" y2="521.5" stroke="#000080" stroke-width="1.15"/><line x1="403" y1="521.5" x2="431.4" y2="521.5" stroke="#000" stroke-width="1.15"/><text x="417.9" y="518.0" font-size="12.5" fill="#000" stroke="#000" stroke-width="0.05" text-anchor="middle" >3</text><rect x="431.5" y="506.5" width="85" height="57" fill="#ffffb4" stroke="#800000" stroke-width="1.15"/><text x="431.4" y="491.1" font-size="10.2" fill="#000080" stroke="#000080" stroke-width="0.3" text-anchor="start" >U4</text><text x="431.4" y="504.6" font-size="10.2" fill="#000080" stroke="#000080" stroke-width="0.3" text-anchor="start" >LM1084IS-ADJ</text><text x="441.9" y="524.8" font-size="12.8" fill="#000" stroke="#000" stroke-width="0.05" text-anchor="start" >IN</text><text x="480.7" y="524.8" font-size="12.8" fill="#000" stroke="#000" stroke-width="0.05" text-anchor="start" >OUT</text><text x="474.6" y="550.4" font-size="12.5" fill="#000" text-anchor="middle" dominant-baseline="central" transform="rotate(-90 474.6 550.4)">1</text><line x1="474.5" y1="563.2" x2="474.5" y2="592" stroke="#000" stroke-width="1.15"/><text x="467.5" y="576.7" font-size="12.5" fill="#000" text-anchor="middle" dominant-baseline="central" transform="rotate(-90 467.5 576.7)">1</text><circle cx="474" cy="592" r="3.6" fill="#000080"/><polyline points="474,592.5 545.5,592.5 545.5,572.1" stroke="#000080" stroke-width="1.2" fill="none"/><polyline points="545,554.4 548,555.9 542,558.8 548,561.8 542,564.7 548,567.7 542,570.6 545,572.1" stroke="#000080" stroke-width="1.2" fill="none"/><line x1="545.5" y1="554.4" x2="545.5" y2="521" stroke="#000080" stroke-width="1.15"/><line x1="516.5" y1="521.5" x2="545" y2="521.5" stroke="#000" stroke-width="1.15"/><text x="531" y="518.0" font-size="12.5" fill="#000" stroke="#000" stroke-width="0.05" text-anchor="middle" >2</text><line x1="545" y1="521.5" x2="658.4" y2="521.5" stroke="#000080" stroke-width="1.15"/><circle cx="545" cy="521" r="3.6" fill="#000080"/><circle cx="601.5" cy="521" r="3.6" fill="#000080"/><text x="562" y="561.2" font-size="10.2" fill="#000080" stroke="#000080" stroke-width="0.3" text-anchor="start" >R18</text><text x="562" y="576.0" font-size="10.2" fill="#000080" stroke="#000080" stroke-width="0.3" text-anchor="start" >120R</text><line x1="388.5" y1="521" x2="388.5" y2="553.5" stroke="#000080" stroke-width="1.15"/><line x1="377.40000000000003" y1="553.5" x2="399.8" y2="553.5" stroke="#000080" stroke-width="1.15"/><line x1="380.1" y1="548.5" x2="385.1" y2="548.5" stroke="#000080" stroke-width="1.15"/><line x1="382.5" y1="545.8" x2="382.5" y2="550.8" stroke="#000080" stroke-width="1.15"/><path d="M377.1,563.0 Q388.6,556.5 400.1,563.0" stroke="#000080" stroke-width="1.4" fill="none"/><line x1="388.5" y1="559.5" x2="388.5" y2="578.5" stroke="#000" stroke-width="1.15"/><line x1="388.5" y1="578.5" x2="388.5" y2="592" stroke="#800000" stroke-width="1.15"/><line x1="374.6" y1="592.5" x2="402.6" y2="592.5" stroke="#800000" stroke-width="1.15"/><line x1="378.6" y1="596.5" x2="398.6" y2="596.5" stroke="#800000" stroke-width="1.15"/><line x1="382.6" y1="600.5" x2="394.6" y2="600.5" stroke="#800000" stroke-width="1.15"/><line x1="386.6" y1="604.5" x2="390.6" y2="604.5" stroke="#800000" stroke-width="1.15"/><text x="400.5" y="556.9" font-size="10.2" fill="#000080" stroke="#000080" stroke-width="0.3" text-anchor="start" >C13</text><text x="400.5" y="571.0" font-size="10.2" fill="#000080" stroke="#000080" stroke-width="0.3" text-anchor="start" >10uF</text><text x="401.3" y="585.1" font-size="12.5" fill="#000080" stroke="#000080" stroke-width="0.05" text-anchor="start" >Tant</text><line x1="601.5" y1="521" x2="601.5" y2="553.5" stroke="#000080" stroke-width="1.15"/><line x1="590.3" y1="553.5" x2="612.7" y2="553.5" stroke="#000080" stroke-width="1.15"/><line x1="593.0" y1="548.5" x2="598.0" y2="548.5" stroke="#000080" stroke-width="1.15"/><line x1="595.5" y1="545.8" x2="595.5" y2="550.8" stroke="#000080" stroke-width="1.15"/><path d="M590.0,563.0 Q601.5,556.5 613.0,563.0" stroke="#000080" stroke-width="1.4" fill="none"/><line x1="601.5" y1="559.5" x2="601.5" y2="578.5" stroke="#000" stroke-width="1.15"/><line x1="601.5" y1="578.5" x2="601.5" y2="592" stroke="#800000" stroke-width="1.15"/><line x1="587.5" y1="592.5" x2="615.5" y2="592.5" stroke="#800000" stroke-width="1.15"/><line x1="591.5" y1="596.5" x2="611.5" y2="596.5" stroke="#800000" stroke-width="1.15"/><line x1="595.5" y1="600.5" x2="607.5" y2="600.5" stroke="#800000" stroke-width="1.15"/><line x1="599.5" y1="604.5" x2="603.5" y2="604.5" stroke="#800000" stroke-width="1.15"/><text x="613.4" y="556.9" font-size="10.2" fill="#000080" stroke="#000080" stroke-width="0.3" text-anchor="start" >C30</text><text x="613.4" y="571.0" font-size="10.2" fill="#000080" stroke="#000080" stroke-width="0.3" text-anchor="start" >10uF</text><text x="614.2" y="585.1" font-size="12.5" fill="#000080" stroke="#000080" stroke-width="0.05" text-anchor="start" >Tant</text><line x1="658.5" y1="521" x2="658.5" y2="553.5" stroke="#000080" stroke-width="1.15"/><line x1="647.1999999999999" y1="553.5" x2="669.6" y2="553.5" stroke="#000080" stroke-width="1.15"/><line x1="649.9" y1="548.5" x2="654.9" y2="548.5" stroke="#000080" stroke-width="1.15"/><line x1="652.5" y1="545.8" x2="652.5" y2="550.8" stroke="#000080" stroke-width="1.15"/><path d="M646.9,563.0 Q658.4,556.5 669.9,563.0" stroke="#000080" stroke-width="1.4" fill="none"/><line x1="658.5" y1="559.5" x2="658.5" y2="578.5" stroke="#000" stroke-width="1.15"/><line x1="658.5" y1="578.5" x2="658.5" y2="592" stroke="#800000" stroke-width="1.15"/><line x1="644.4" y1="592.5" x2="672.4" y2="592.5" stroke="#800000" stroke-width="1.15"/><line x1="648.4" y1="596.5" x2="668.4" y2="596.5" stroke="#800000" stroke-width="1.15"/><line x1="652.4" y1="600.5" x2="664.4" y2="600.5" stroke="#800000" stroke-width="1.15"/><line x1="656.4" y1="604.5" x2="660.4" y2="604.5" stroke="#800000" stroke-width="1.15"/><text x="670.3" y="556.9" font-size="10.2" fill="#000080" stroke="#000080" stroke-width="0.3" text-anchor="start" >C3</text><text x="670.3" y="569.6" font-size="10.2" fill="#000080" stroke="#000080" stroke-width="0.3" text-anchor="start" >100uF 16V</text><line x1="658.5" y1="506.3" x2="658.5" y2="521" stroke="#800000" stroke-width="1.15"/><line x1="651.4" y1="506.5" x2="665.4" y2="506.5" stroke="#800000" stroke-width="1.15"/><text x="648.8" y="504.2" font-size="12.6" fill="#800000" stroke="#800000" stroke-width="0.05" text-anchor="start" >1V8</text><circle cx="658.4" cy="521" r="3.6" fill="#000080"/><circle cx="658.4" cy="500.3" r="22.6" fill="none" stroke="#eb7a22" stroke-width="3.3"/><line x1="474.5" y1="592" x2="474.5" y2="625.4" stroke="#000080" stroke-width="1.15"/><polyline points="474,625.4 477,626.8 471,629.7 477,632.6 471,635.4 477,638.3 471,641.2 474,642.6" stroke="#000080" stroke-width="1.2" fill="none"/><line x1="474.5" y1="642.6" x2="474.5" y2="697" stroke="#000080" stroke-width="1.15"/><polyline points="474,697 477,698.4 471,701.3 477,704.2 471,707.1 477,710.0 471,712.9 474,714.3" stroke="#000080" stroke-width="1.2" fill="none"/><line x1="474.5" y1="714.3" x2="474.5" y2="734.3" stroke="#000080" stroke-width="1.15"/><line x1="474.5" y1="734.3" x2="474.5" y2="748.3" stroke="#800000" stroke-width="1.15"/><line x1="460" y1="748.5" x2="488" y2="748.5" stroke="#800000" stroke-width="1.15"/><line x1="464" y1="752.5" x2="484" y2="752.5" stroke="#800000" stroke-width="1.15"/><line x1="468" y1="756.5" x2="480" y2="756.5" stroke="#800000" stroke-width="1.15"/><line x1="472" y1="761.5" x2="476" y2="761.5" stroke="#800000" stroke-width="1.15"/><text x="491.2" y="632.2" font-size="10.2" fill="#000080" stroke="#000080" stroke-width="0.3" text-anchor="start" >R17</text><text x="491.2" y="647.5" font-size="10.2" fill="#000080" stroke="#000080" stroke-width="0.3" text-anchor="start" >47R</text><text x="491.2" y="703.0" font-size="10.2" fill="#000080" stroke="#000080" stroke-width="0.3" text-anchor="start" >R19</text><text x="491.2" y="718.6" font-size="10.2" fill="#000080" stroke="#000080" stroke-width="0.3" text-anchor="start" >5R6</text><line x1="814.5" y1="506.3" x2="814.5" y2="521" stroke="#800000" stroke-width="1.15"/><line x1="807.6" y1="506.5" x2="821.6" y2="506.5" stroke="#800000" stroke-width="1.15"/><text x="807.9" y="504.2" font-size="12.6" fill="#800000" stroke="#800000" stroke-width="0.05" text-anchor="start" >5V</text><circle cx="814.6" cy="521" r="3.6" fill="#000080"/><line x1="814.6" y1="521.5" x2="829" y2="521.5" stroke="#000080" stroke-width="1.15"/><line x1="829" y1="521.5" x2="857.4" y2="521.5" stroke="#000" stroke-width="1.15"/><text x="843.9" y="518.0" font-size="12.5" fill="#000" stroke="#000" stroke-width="0.05" text-anchor="middle" >3</text><rect x="857.5" y="506.5" width="85" height="57" fill="#ffffb4" stroke="#800000" stroke-width="1.15"/><text x="857.4" y="491.1" font-size="10.2" fill="#000080" stroke="#000080" stroke-width="0.3" text-anchor="start" >U3</text><text x="857.4" y="504.6" font-size="10.2" fill="#000080" stroke="#000080" stroke-width="0.3" text-anchor="start" >LM1084IS-ADJ</text><text x="867.9" y="524.8" font-size="12.8" fill="#000" stroke="#000" stroke-width="0.05" text-anchor="start" >IN</text><text x="906.7" y="524.8" font-size="12.8" fill="#000" stroke="#000" stroke-width="0.05" text-anchor="start" >OUT</text><text x="900.6" y="550.4" font-size="12.5" fill="#000" text-anchor="middle" dominant-baseline="central" transform="rotate(-90 900.6 550.4)">1</text><line x1="900.5" y1="563.2" x2="900.5" y2="592" stroke="#000" stroke-width="1.15"/><text x="893.5" y="576.7" font-size="12.5" fill="#000" text-anchor="middle" dominant-baseline="central" transform="rotate(-90 893.5 576.7)">1</text><circle cx="900" cy="592" r="3.6" fill="#000080"/><polyline points="900,592.5 971.5,592.5 971.5,572.1" stroke="#000080" stroke-width="1.2" fill="none"/><polyline points="971,554.4 974,555.9 968,558.8 974,561.8 968,564.7 974,567.7 968,570.6 971,572.1" stroke="#000080" stroke-width="1.2" fill="none"/><line x1="971.5" y1="554.4" x2="971.5" y2="521" stroke="#000080" stroke-width="1.15"/><line x1="942.5" y1="521.5" x2="971" y2="521.5" stroke="#000" stroke-width="1.15"/><text x="957" y="518.0" font-size="12.5" fill="#000" stroke="#000" stroke-width="0.05" text-anchor="middle" >2</text><line x1="971" y1="521.5" x2="1084.4" y2="521.5" stroke="#000080" stroke-width="1.15"/><circle cx="971" cy="521" r="3.6" fill="#000080"/><circle cx="1027.5" cy="521" r="3.6" fill="#000080"/><text x="988" y="561.2" font-size="10.2" fill="#000080" stroke="#000080" stroke-width="0.3" text-anchor="start" >R13</text><text x="988" y="576.0" font-size="10.2" fill="#000080" stroke="#000080" stroke-width="0.3" text-anchor="start" >120R</text><line x1="814.5" y1="521" x2="814.5" y2="553.5" stroke="#000080" stroke-width="1.15"/><line x1="803.4" y1="553.5" x2="825.8000000000001" y2="553.5" stroke="#000080" stroke-width="1.15"/><line x1="806.1" y1="548.5" x2="811.1" y2="548.5" stroke="#000080" stroke-width="1.15"/><line x1="808.5" y1="545.8" x2="808.5" y2="550.8" stroke="#000080" stroke-width="1.15"/><path d="M803.1,563.0 Q814.6,556.5 826.1,563.0" stroke="#000080" stroke-width="1.4" fill="none"/><line x1="814.5" y1="559.5" x2="814.5" y2="578.5" stroke="#000" stroke-width="1.15"/><line x1="814.5" y1="578.5" x2="814.5" y2="592" stroke="#800000" stroke-width="1.15"/><line x1="800.6" y1="592.5" x2="828.6" y2="592.5" stroke="#800000" stroke-width="1.15"/><line x1="804.6" y1="596.5" x2="824.6" y2="596.5" stroke="#800000" stroke-width="1.15"/><line x1="808.6" y1="600.5" x2="820.6" y2="600.5" stroke="#800000" stroke-width="1.15"/><line x1="812.6" y1="604.5" x2="816.6" y2="604.5" stroke="#800000" stroke-width="1.15"/><text x="826.5" y="556.9" font-size="10.2" fill="#000080" stroke="#000080" stroke-width="0.3" text-anchor="start" >C27</text><text x="826.5" y="571.0" font-size="10.2" fill="#000080" stroke="#000080" stroke-width="0.3" text-anchor="start" >10uF</text><text x="827.3" y="585.1" font-size="12.5" fill="#000080" stroke="#000080" stroke-width="0.05" text-anchor="start" >Tant</text><line x1="1027.5" y1="521" x2="1027.5" y2="553.5" stroke="#000080" stroke-width="1.15"/><line x1="1016.3" y1="553.5" x2="1038.7" y2="553.5" stroke="#000080" stroke-width="1.15"/><line x1="1019.0" y1="548.5" x2="1024.0" y2="548.5" stroke="#000080" stroke-width="1.15"/><line x1="1021.5" y1="545.8" x2="1021.5" y2="550.8" stroke="#000080" stroke-width="1.15"/><path d="M1016.0,563.0 Q1027.5,556.5 1039.0,563.0" stroke="#000080" stroke-width="1.4" fill="none"/><line x1="1027.5" y1="559.5" x2="1027.5" y2="578.5" stroke="#000" stroke-width="1.15"/><line x1="1027.5" y1="578.5" x2="1027.5" y2="592" stroke="#800000" stroke-width="1.15"/><line x1="1013.5" y1="592.5" x2="1041.5" y2="592.5" stroke="#800000" stroke-width="1.15"/><line x1="1017.5" y1="596.5" x2="1037.5" y2="596.5" stroke="#800000" stroke-width="1.15"/><line x1="1021.5" y1="600.5" x2="1033.5" y2="600.5" stroke="#800000" stroke-width="1.15"/><line x1="1025.5" y1="604.5" x2="1029.5" y2="604.5" stroke="#800000" stroke-width="1.15"/><text x="1039.4" y="556.9" font-size="10.2" fill="#000080" stroke="#000080" stroke-width="0.3" text-anchor="start" >C14</text><text x="1039.4" y="571.0" font-size="10.2" fill="#000080" stroke="#000080" stroke-width="0.3" text-anchor="start" >10uF</text><text x="1040.2" y="585.1" font-size="12.5" fill="#000080" stroke="#000080" stroke-width="0.05" text-anchor="start" >Tant</text><line x1="1084.5" y1="521" x2="1084.5" y2="553.5" stroke="#000080" stroke-width="1.15"/><line x1="1073.2" y1="553.5" x2="1095.6000000000001" y2="553.5" stroke="#000080" stroke-width="1.15"/><line x1="1075.9" y1="548.5" x2="1080.9" y2="548.5" stroke="#000080" stroke-width="1.15"/><line x1="1078.5" y1="545.8" x2="1078.5" y2="550.8" stroke="#000080" stroke-width="1.15"/><path d="M1072.9,563.0 Q1084.4,556.5 1095.9,563.0" stroke="#000080" stroke-width="1.4" fill="none"/><line x1="1084.5" y1="559.5" x2="1084.5" y2="578.5" stroke="#000" stroke-width="1.15"/><line x1="1084.5" y1="578.5" x2="1084.5" y2="592" stroke="#800000" stroke-width="1.15"/><line x1="1070.4" y1="592.5" x2="1098.4" y2="592.5" stroke="#800000" stroke-width="1.15"/><line x1="1074.4" y1="596.5" x2="1094.4" y2="596.5" stroke="#800000" stroke-width="1.15"/><line x1="1078.4" y1="600.5" x2="1090.4" y2="600.5" stroke="#800000" stroke-width="1.15"/><line x1="1082.4" y1="604.5" x2="1086.4" y2="604.5" stroke="#800000" stroke-width="1.15"/><text x="1096.3" y="556.9" font-size="10.2" fill="#000080" stroke="#000080" stroke-width="0.3" text-anchor="start" >C2</text><text x="1096.3" y="569.6" font-size="10.2" fill="#000080" stroke="#000080" stroke-width="0.3" text-anchor="start" >100uF 16V</text><line x1="1084.5" y1="506.3" x2="1084.5" y2="521" stroke="#800000" stroke-width="1.15"/><line x1="1077.4" y1="506.5" x2="1091.4" y2="506.5" stroke="#800000" stroke-width="1.15"/><text x="1074.8" y="504.2" font-size="12.6" fill="#800000" stroke="#800000" stroke-width="0.05" text-anchor="start" >3V3</text><circle cx="1084.4" cy="521" r="3.6" fill="#000080"/><circle cx="1084.4" cy="500.3" r="22.6" fill="none" stroke="#eb7a22" stroke-width="3.3"/><line x1="900.5" y1="592" x2="900.5" y2="626.3" stroke="#000080" stroke-width="1.15"/><polyline points="900,626.3 903,627.7 897,630.4 903,633.1 897,635.8 903,638.5 897,641.2 900,642.6" stroke="#000080" stroke-width="1.2" fill="none"/><line x1="900.5" y1="642.6" x2="900.5" y2="682.7" stroke="#000080" stroke-width="1.15"/><polyline points="900,682.7 903,684.1 897,686.8 903,689.5 897,692.2 903,694.9 897,697.6 900,699" stroke="#000080" stroke-width="1.2" fill="none"/><line x1="900.5" y1="699" x2="900.5" y2="719" stroke="#000080" stroke-width="1.15"/><line x1="900.5" y1="719" x2="900.5" y2="733" stroke="#800000" stroke-width="1.15"/><line x1="886" y1="733.5" x2="914" y2="733.5" stroke="#800000" stroke-width="1.15"/><line x1="890" y1="737.5" x2="910" y2="737.5" stroke="#800000" stroke-width="1.15"/><line x1="894" y1="741.5" x2="906" y2="741.5" stroke="#800000" stroke-width="1.15"/><line x1="898" y1="745.5" x2="902" y2="745.5" stroke="#800000" stroke-width="1.15"/><text x="916.8" y="632.2" font-size="10.2" fill="#000080" stroke="#000080" stroke-width="0.3" text-anchor="start" >R12</text><text x="916.8" y="647.5" font-size="10.2" fill="#000080" stroke="#000080" stroke-width="0.3" text-anchor="start" >100R</text><text x="914" y="689.0" font-size="10.2" fill="#000080" stroke="#000080" stroke-width="0.3" text-anchor="start" >R14</text><text x="914" y="703.4" font-size="10.2" fill="#000080" stroke="#000080" stroke-width="0.3" text-anchor="start" >100R</text><text x="970.7" y="504.1" font-size="12.5" fill="#000080" stroke="#000080" stroke-width="0.05" text-anchor="start" >3V3</text><ellipse cx="639" cy="274.6" rx="44.3" ry="26" fill="none" stroke="#eb7a22" stroke-width="3.3"/></g></svg><!--/SCH-->
<div class="a" style="left:300px;top:58px;width:506px;height:27.5px;background:#373737;border-radius:0 4px 4px 0"></div>
<svg class="a" style="left:300px;top:58px" width="506" height="27" viewBox="300 58 506 27">
 <line x1="521.5" y1="64" x2="521.5" y2="80" stroke="#1e1e1e" stroke-width="1"/>
 <g fill="#fff">
  <path d="M515 84 L520 79 L520 84z"/><path d="M572.5 84 L577.5 79 L577.5 84z"/><path d="M600 84 L605 79 L605 84z"/>
  <path d="M628 84 L633 79 L633 84z"/><path d="M656 84 L661 79 L661 84z"/><path d="M684 84 L689 79 L689 84z"/>
  <path d="M712 84 L717 79 L717 84z"/><path d="M740 84 L745 79 L745 84z"/><path d="M768 84 L773 79 L773 84z"/><path d="M796 84 L801 79 L801 84z"/>
 </g>
 <defs><linearGradient id="icg" x1="0" y1="0" x2="0" y2="1"><stop offset="0" stop-color="#fde9a0"/><stop offset="1" stop-color="#f0c060"/></linearGradient></defs>
 <g stroke="#b8a868" stroke-width="1"><path d="M529 67.5h3M529 70.5h3M529 73.5h3M529 76.5h3M540 67.5h3M540 70.5h3M540 73.5h3M540 76.5h3"/></g>
 <rect x="532.5" y="65.5" width="7" height="13.5" fill="url(#icg)" stroke="#d8a850" stroke-width="1"/>
 <path d="M556 67.5h6l4 3.5h6M556 72h6l4 3.5h6" stroke="#5b90d6" stroke-width="1.8" fill="none"/>
 <path d="M591.5 64.5v7.5M584 72.5h15M586.5 75h10M588.5 77.5h6M590 80h3" stroke="#d24b4b" stroke-width="1.2" fill="none"/>
 <rect x="612" y="64" width="3.5" height="15" fill="#c8dcf8" stroke="#8fb0e0" stroke-width="0.6"/>
 <path d="M615.5 71.5h2M619 75l1.6-7M622 75l1.6-7M625 75l1.6-7" stroke="#2e4fb0" stroke-width="1.3" fill="none"/>
 <rect x="642.5" y="66.5" width="12.5" height="11.5" fill="#5fc080" stroke="#3d6ec0" stroke-width="1.2"/>
 <path d="M640 69.5h4M640 74.5h4M653 69.5h4M653 74.5h4" stroke="#a8d0ff" stroke-width="1"/>
 <path d="M667.5 67 H680 L684 71.5 L680 76 H667.5z" fill="#f0d97a" stroke="#b89a40" stroke-width="0.8"/>
 <path d="M684 71.5h3" stroke="#c8b060" stroke-width="1"/>
 <text x="669" y="75" font-family="Liberation Sans" font-weight="bold" font-size="8" fill="#4a3a10">D1</text>
 <circle cx="705.2" cy="71.2" r="6.2" fill="none" stroke="#cf4a55" stroke-width="1.1"/>
 <path d="M696 71.2h3M705.2 69.5v5" stroke="#cf4a55" stroke-width="1.1"/><circle cx="705.2" cy="67.3" r="0.8" fill="#cf4a55"/>
 <text x="732" y="78.8" font-family="Liberation Serif" font-weight="bold" font-size="19" fill="#5f9be0" text-anchor="middle">A</text>
 <path d="M752.5 77 A7.5 7.5 0 1 1 767 77" stroke="#5b8fd4" stroke-width="1.3" fill="none"/>
 <path d="M780 72h15" stroke="#e8b040" stroke-width="1.6"/>
 <path d="M785.5 67.5h4.5l2.3 2.3v4.5l-2.3 2.3h-4.5l-2.3-2.3v-4.5z" fill="#f7c531"/>
</svg>

<div id="status" class="a">
  <div class="a" style="left:5px;top:7px;font-size:10.8px;line-height:13px;color:#dedede">X:800.000mil Y:8100.000mil</div>
  <div class="a" style="left:152px;top:7px;font-size:11.2px;line-height:13px;color:#dedede">Grid:100mil</div>
  <div class="a" style="left:1136px;top:5px;width:43px;height:17px;background:#4d4d4d;border:1px solid #262626;border-radius:3px"></div>
  <div class="a" style="left:1142px;top:7px;font-size:10.8px;line-height:13px;color:#f0f0f0">Panels</div>
</div>
<div id="dropdown" class="a">
<div class="a" style="left:1px;top:237px;width:250px;height:24px;background:#5a7fa7"></div>
<div class="sep" style="top:27px"></div>
<div class="sep" style="top:176px"></div>
<div class="sep" style="top:205px"></div>
<div class="sep" style="top:235px"></div>
<div class="sep" style="top:263px"></div>
<div class="sep" style="top:292.5px"></div>
<div class="sep" style="top:369px"></div>
<div class="mi" style="top:6.2px">Up/Down <u>H</u>ierarchy</div>
<div class="mi" style="top:34.7px">Pa<u>r</u>ameter Manager...</div>
<div class="mi" style="top:58.7px">Footprint Mana<u>g</u>er...</div>
<div class="mi" style="top:82.5px">Update From <u>L</u>ibraries...</div>
<div class="mi" style="top:106.6px">Update Selected From <u>L</u>ibraries...</div>
<div class="mi" style="top:130.6px">Update Parameters From <u>D</u>atabase...</div>
<div class="mi" style="top:154.6px">Item Manager...</div>
<div class="mi" style="top:183.8px"><u>A</u>nnotation</div>
<div class="mi" style="top:213.2px">Signal Integrit<u>y</u>...</div>
<div class="mi" style="top:241.7px">Power Analyzer by Keysight</div>
<div class="mi" style="top:270.9px">Con<u>v</u>ert</div>
<div class="mi" style="top:299.6px"><u>C</u>ross Probe</div>
<div class="mi" style="top:323.8px">Cross Select Mode</div>
<div class="mi" style="top:348px"><u>S</u>elect PCB Components</div>
<div class="mi" style="top:377px">Configure Pin S<u>w</u>apping...</div>
<div class="mi" style="top:401px"><u>P</u>references...</div>
<div class="mi" style="top:323.8px;left:157px;letter-spacing:0.35px">Shift+Ctrl+X</div>
<svg class="a" style="left:238px;top:186px" width="6" height="9" viewBox="0 0 6 9"><path d="M0.5 0.5 L5.5 4.5 L0.5 8.5z" fill="#ddd"/></svg>
<svg class="a" style="left:238px;top:273px" width="6" height="9" viewBox="0 0 6 9"><path d="M0.5 0.5 L5.5 4.5 L0.5 8.5z" fill="#ddd"/></svg>
</div>

<svg class="a" style="left:263px;top:25px" width="40" height="420" viewBox="263 25 40 420">
 <defs><linearGradient id="arg" x1="0" y1="0" x2="0" y2="1"><stop offset="0" stop-color="#aecbff"/><stop offset="1" stop-color="#5d93e8"/></linearGradient></defs>
 <path d="M270 32h4v7h2l-4 5l-4-5h2z" fill="url(#arg)" stroke="#1a2a50" stroke-width="0.5"/>
 <path d="M278.5 44h-3v-7h-2l4-5l4 5h-2v7z" fill="url(#arg)" stroke="#1a2a50" stroke-width="0.5"/>
 <rect x="268.5" y="240" width="13.5" height="10.5" fill="#fff5c8" stroke="#d09a40" stroke-width="1"/>
 <path d="M270.5 248 V243 H273 V248 H275.5 V243 H278 V247.5 H280" stroke="#7a5a30" stroke-width="0.9" fill="none"/>
 <path d="M278 237.5 L284 241.5 L278.5 245.5z" fill="#3fd060"/>
 <rect x="268" y="322" width="7.5" height="7.5" fill="#f3d35a"/>
 <path d="M272 336 L281 326" stroke="#f08080" stroke-width="3.2" stroke-linecap="round"/>
 <path d="M270 339 L272 336.5" stroke="#c0c0c0" stroke-width="1.2"/>
 <rect x="268" y="347" width="7.5" height="7" fill="#f3d35a"/>
 <path d="M271 352.5 h4.5 a4.5 4.5 0 0 1 0 9 h-4.5z" fill="#f3d35a"/>
 <path d="M267 354.5h4M267 359.5h4M280 357h4" stroke="#e8d070" stroke-width="1"/>
</svg>
<svg class="a" style="left:455px;top:269px" width="16" height="22" viewBox="455 269 16 22">
 <path d="M457.3 271.1 V287.6 L461.5 284.5 L465.3 289.1 L467 288 L464.6 283.6 L468.8 283.2z" fill="#fff" stroke="#000" stroke-width="1" stroke-linejoin="round"/>
</svg>
</body></html>
